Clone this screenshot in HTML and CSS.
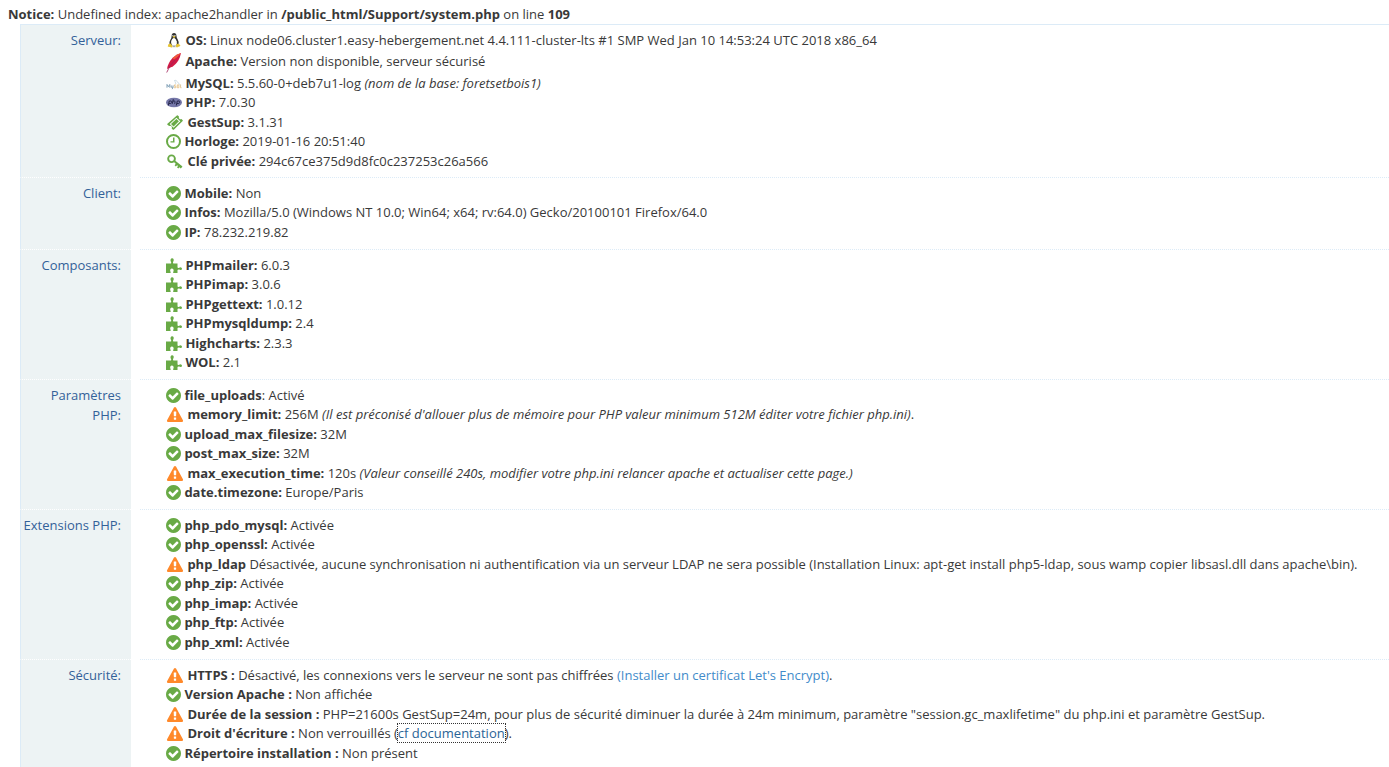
FILE: index.html
```html
<!DOCTYPE html>
<html lang="fr">
<head>
    <meta charset="UTF-8">
    <meta name="viewport" content="width=device-width, initial-scale=1.0">
    <title>GestSup - Système</title>
    <link rel="stylesheet" href="styles.css">
</head>
<body>
    <svg class="sprite" aria-hidden="true">
        <symbol id="check" viewBox="128 128 1536 1536">
            <path d="M1412 734q0-28-18-46l-91-90q-19-19-45-19t-45 19l-408 407-226-226q-19-19-45-19t-45 19l-91 90q-18 18-18 46 0 27 18 45l362 362q19 19 45 19 27 0 46-19l543-543q18-18 18-45zm252 162q0 209-103 385.5t-279.5 279.5-385.5 103-385.5-103-279.5-279.5-103-385.5 103-385.5 279.5-279.5 385.5-103 385.5 103 279.5 279.5 103 385.5z"/>
        </symbol>
        <symbol id="warning" viewBox="0 0 1792 1664">
            <path d="M1024 1375v-190q0-14-9.5-23.5t-22.5-9.5h-192q-13 0-22.5 9.5t-9.5 23.5v190q0 14 9.5 23.5t22.5 9.5h192q13 0 22.5-9.5t9.5-23.5zm-2-374l18-459q0-12-10-19-13-11-24-11h-220q-11 0-24 11-10 7-10 21l17 457q0 10 10 16.5t24 6.5h185q14 0 23.5-6.5t10.5-16.5zm-14-934l768 1408q35 63-2 126-17 29-46.5 46t-63.5 17h-1536q-34 0-63.5-17t-46.5-46q-37-63-2-126l768-1408q17-31 47-49t65-18 65 18 47 49z"/>
        </symbol>
        <symbol id="puzzle" viewBox="0 0 16 15">
            <path d="M0 5.500H5Q5.600 4.500 4.800 3.500Q4.300 2.500 4.600 1.500Q5 .300 6.100 .300Q7.300 .300 7.700 1.500Q7.900 2.500 7.300 3.500Q6.600 4.600 7.300 5.500H11.500V9.500Q12.200 10.300 13.200 9.700Q14.200 9 15.100 9.400Q16 9.800 16 10.700Q16 11.700 15.100 12Q14.200 12.300 13.200 11.600Q12.200 11.100 11.500 12V15H7.300Q6.800 14.200 7.500 13.200Q7.900 12 7.300 11.200Q6.800 10.500 5.900 10.500Q5 10.500 4.500 11.200Q3.900 12 4.300 13.200Q5 14.200 4.500 15H0Z"/>
        </symbol>
        <symbol id="ticket" viewBox="0 0 17 16">
            <path fill-rule="evenodd" d="M10.500.400Q11 0 11.500.400L12.700 1.700Q12.200 3.200 13.100 4Q14 4.900 15.400 4.300L16.700 5.600Q17 6 16.700 6.500L7.200 15.700Q6.700 16 6.300 15.700L5 14.400Q5.600 12.900 4.700 12Q3.800 11.100 2.300 11.700L.400 10.300Q0 9.700.400 9.300ZM10 2.800L2.800 9.600L7 13.600L14.200 6.600Z"/>
            <path d="M10 4.200L12.700 6.600L7 12.200L4.200 9.600Z"/>
        </symbol>
        <symbol id="clock" viewBox="0 0 15 15">
            <circle cx="7.500" cy="7.500" r="6.500" fill="none" stroke="currentColor" stroke-width="2"/>
            <path d="M7 3.500h1.500v5H4.500V7.200H7Z"/>
        </symbol>
        <symbol id="key" viewBox="0 0 17 16">
            <circle cx="4.800" cy="5" r="3.600" fill="none" stroke="currentColor" stroke-width="2"/>
            <path d="M7 8.300L8.500 6.800L16.200 13Q16.700 14 15.600 14.300L14.600 15.400L13.300 14.200L12 15.500L10.600 14.200L11.800 12.800L10.700 11.900L9.400 13.200L8.100 11.900L9.300 10.500Z"/>
        </symbol>
        <symbol id="linux" viewBox="0 0 16 16">
            <ellipse cx="8" cy="14" rx="6.500" ry="1.500" fill="#ddd"/>
            <path fill="#333" d="M8 0Q10.500 0 10.600 3Q10.700 5 12 7Q13.700 9.700 12.700 12.500L8 14.500L3.300 12.500Q2.500 9.700 4.200 7.300Q5.500 5.400 5.500 3Q5.600 0 8 0Z"/>
            <path fill="#fff" d="M8 5Q10.200 6 11 9Q11.600 11.500 10 13.600H6Q4.300 11 5 8.500Q5.800 6 8 5Z"/>
            <path fill="#e8c430" d="M6.400 3.600L8 3L9.700 3.700L8 5.300ZM2 12L4.300 11.300L6.500 14.200L5.700 15.500L1.300 14.400ZM11 11.500L13.200 11.600L15 13.300L11.200 15.500L9.800 14.500Z"/>
            <path fill="#fff" d="M6.300 2h1v1.400h-1zM8.500 2h1v1.400h-1z"/>
        </symbol>
        <symbol id="apache" viewBox="0 0 16 20">
            <path fill="#d11a45" d="M15 0Q10.500.800 6.500 5Q1.800 10.200 1 16L4.500 14.600Q10 12 12.600 7Q14.300 3.500 15 0Z"/>
            <path fill="#ef5a3c" d="M15 0Q10.500.800 6.500 5L8 6.600Q12 4 15 0Z"/>
            <path fill="none" stroke="#a01f58" stroke-width=".8" d="M9 7Q3.500 12 .700 19.500"/>
        </symbol>
        <symbol id="mysql" viewBox="0 0 16 16">
            <path fill="none" stroke="#7f9fb5" d="M.500 12.500V9l1.500 2.500L3.500 9v3.500M5 10v2h2v-2M7 12l-1 2"/>
            <path fill="none" stroke="#e6c58e" d="M10 9.500H8.500V11H10v1.500H8M11.500 9.500h1.700v3h-1.700zM15 9v3.500h1"/>
            <path fill="none" stroke="#b4cbd8" stroke-width=".7" d="M8 5Q10 3.500 12 6.500T15 10M9 5.500l1 3"/>
        </symbol>
        <symbol id="php" viewBox="0 0 16 10">
            <ellipse cx="8" cy="5" rx="8" ry="4.800" fill="#7577a8"/>
            <path fill="none" stroke="#25264a" d="M2.300 8L3.300 3.500H5Q6 3.700 5.600 5Q5.300 6 4.400 6H3M7.300 1.700L6.300 6.300M7 3.500H8.300Q9.300 3.600 9 4.700L8.700 6.300M10.300 8L11.300 3.500H13Q14 3.700 13.600 5Q13.300 6 12.400 6H11"/>
        </symbol>
    </svg>

    <div class="notice"><b>Notice:</b> Undefined index: apache2handler in <b>/public_html/Support/system.php</b> on line <b>109</b></div>

    <div class="infos">
        <div class="row">
            <div class="name">Serveur:</div>
            <ul class="value">
                <li><svg class="icon img"><use href="#linux"/></svg> <b>OS:</b> Linux node06.cluster1.easy-hebergement.net 4.4.111-cluster-lts #1 SMP Wed Jan 10 14:53:24 UTC 2018 x86_64</li>
                <li class="tall"><svg class="icon feather"><use href="#apache"/></svg> <b>Apache:</b> Version non disponible, serveur sécurisé</li>
                <li><svg class="icon img"><use href="#mysql"/></svg> <b>MySQL:</b> 5.5.60-0+deb7u1-log <i>(nom de la base: foretsetbois1)</i></li>
                <li><svg class="icon img"><use href="#php"/></svg> <b>PHP:</b> 7.0.30</li>
                <li><svg class="icon green wide"><use href="#ticket"/></svg> <b>GestSup:</b> 3.1.31</li>
                <li><svg class="icon green"><use href="#clock"/></svg> <b>Horloge:</b> 2019-01-16 20:51:40</li>
                <li><svg class="icon green wide"><use href="#key"/></svg> <b>Clé privée:</b> 294c67ce375d9d8fc0c237253c26a566</li>
            </ul>
        </div>
        <div class="row">
            <div class="name">Client:</div>
            <ul class="value">
                <li><svg class="icon green"><use href="#check"/></svg> <b>Mobile:</b> Non</li>
                <li><svg class="icon green"><use href="#check"/></svg> <b>Infos:</b> Mozilla/5.0 (Windows NT 10.0; Win64; x64; rv:64.0) Gecko/20100101 Firefox/64.0</li>
                <li><svg class="icon green"><use href="#check"/></svg> <b>IP:</b> 78.232.219.82</li>
            </ul>
        </div>
        <div class="row">
            <div class="name">Composants:</div>
            <ul class="value">
                <li><svg class="icon green img"><use href="#puzzle"/></svg> <b>PHPmailer:</b> 6.0.3</li>
                <li><svg class="icon green img"><use href="#puzzle"/></svg> <b>PHPimap:</b> 3.0.6</li>
                <li><svg class="icon green img"><use href="#puzzle"/></svg> <b>PHPgettext:</b> 1.0.12</li>
                <li><svg class="icon green img"><use href="#puzzle"/></svg> <b>PHPmysqldump:</b> 2.4</li>
                <li><svg class="icon green img"><use href="#puzzle"/></svg> <b>Highcharts:</b> 2.3.3</li>
                <li><svg class="icon green img"><use href="#puzzle"/></svg> <b>WOL:</b> 2.1</li>
            </ul>
        </div>
        <div class="row">
            <div class="name">Paramètres PHP:</div>
            <ul class="value">
                <li><svg class="icon green"><use href="#check"/></svg> <b>file_uploads</b>: Activé</li>
                <li><svg class="icon orange wide"><use href="#warning"/></svg> <b>memory_limit:</b> 256M <i>(Il est préconisé d'allouer plus de mémoire pour PHP valeur minimum 512M éditer votre fichier php.ini)</i>.</li>
                <li><svg class="icon green"><use href="#check"/></svg> <b>upload_max_filesize:</b> 32M</li>
                <li><svg class="icon green"><use href="#check"/></svg> <b>post_max_size:</b> 32M</li>
                <li><svg class="icon orange wide"><use href="#warning"/></svg> <b>max_execution_time:</b> 120s <i>(Valeur conseillé 240s, modifier votre php.ini relancer apache et actualiser cette page.)</i></li>
                <li><svg class="icon green"><use href="#check"/></svg> <b>date.timezone:</b> Europe/Paris</li>
            </ul>
        </div>
        <div class="row">
            <div class="name">Extensions PHP:</div>
            <ul class="value">
                <li><svg class="icon green"><use href="#check"/></svg> <b>php_pdo_mysql:</b> Activée</li>
                <li><svg class="icon green"><use href="#check"/></svg> <b>php_openssl:</b> Activée</li>
                <li><svg class="icon orange wide"><use href="#warning"/></svg> <b>php_ldap</b> Désactivée, aucune synchronisation ni authentification via un serveur LDAP ne sera possible (Installation Linux: apt-get install php5-ldap, sous wamp copier libsasl.dll dans apache\bin).</li>
                <li><svg class="icon green"><use href="#check"/></svg> <b>php_zip:</b> Activée</li>
                <li><svg class="icon green"><use href="#check"/></svg> <b>php_imap:</b> Activée</li>
                <li><svg class="icon green"><use href="#check"/></svg> <b>php_ftp:</b> Activée</li>
                <li><svg class="icon green"><use href="#check"/></svg> <b>php_xml:</b> Activée</li>
            </ul>
        </div>
        <div class="row">
            <div class="name">Sécurité:</div>
            <ul class="value">
                <li><svg class="icon orange wide"><use href="#warning"/></svg> <b>HTTPS :</b> Désactivé, les connexions vers le serveur ne sont pas chiffrées <a href="#">(Installer un certificat Let's Encrypt)</a>.</li>
                <li><svg class="icon green"><use href="#check"/></svg> <b>Version Apache :</b> Non affichée</li>
                <li><svg class="icon orange wide"><use href="#warning"/></svg> <b>Durée de la session :</b> PHP=21600s GestSup=24m, pour plus de sécurité diminuer la durée à 24m minimum, paramètre "session.gc_maxlifetime" du php.ini et paramètre GestSup.</li>
                <li><svg class="icon orange wide"><use href="#warning"/></svg> <b>Droit d'écriture :</b> Non verrouillés (<a href="#" class="focus">cf documentation</a>).</li>
                <li><svg class="icon green"><use href="#check"/></svg> <b>Répertoire installation :</b> Non présent</li>
            </ul>
        </div>
    </div>
</body>
</html>
```
FILE: styles.css
```css
body {
    margin: 0;
    padding-top: 4px;
    font-family: "Open Sans", sans-serif;
    font-size: 13px;
    line-height: 20px;
    color: #393939;
    background: #fff;
}
.sprite {
    display: none;
}
.notice {
    padding-left: 8px;
}
.infos {
    margin-left: 20px;
    border-top: 1px solid #dcebf7;
}
.row {
    display: flex;
}
.name {
    box-sizing: border-box;
    flex: none;
    width: 111px;
    padding: 5px 10px 7px 0;
    border-left: 1px solid #dcebf7;
    border-top: 1px dotted #fff;
    background: #edf3f4;
    color: #336199;
    text-align: right;
}
.value {
    flex: 1;
    margin: 0 0 0 9px;
    padding: 5px 0 7px 26px;
    border-top: 1px dotted #dcebf7;
    list-style: none;
}
.row:first-child .name,
.row:first-child .value {
    border-top: none;
}
.row:first-child .value {
    padding-bottom: 6px;
}
.row:last-child .value {
    padding-bottom: 5px;
}
.value li:nth-child(even) {
    line-height: 19px;
}
.value li.tall {
    line-height: 22px;
}
.icon {
    width: 15px;
    height: 15px;
    vertical-align: -3px;
    fill: currentColor;
}
.img {
    width: 16px;
}
.wide {
    width: 18px;
}
.feather {
    width: 16px;
    height: 20px;
    vertical-align: -7px;
}
.green {
    color: #69aa46;
}
.orange {
    color: #ff892a;
}
a {
    color: #428bca;
    text-decoration: none;
}
.focus {
    color: #2a6496;
    outline: 1px dotted #333;
}
```
